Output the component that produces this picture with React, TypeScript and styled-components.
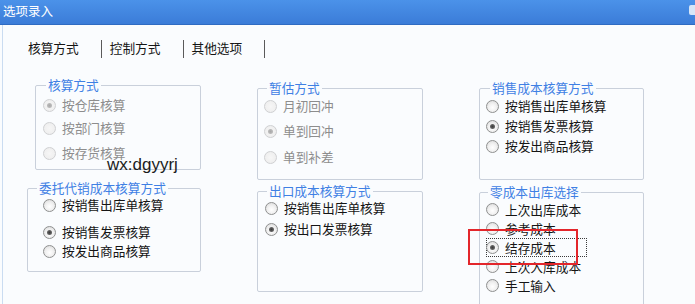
import React from "react";
import styled, { createGlobalStyle, css } from "styled-components";

const Global = createGlobalStyle`
  html, body { margin: 0; padding: 0; background: #fafcfe; }
  body { font-family: "Noto Sans CJK SC", "Noto Sans", sans-serif; }
`;

const FONT = 12.7;

const Window = styled.div`
  width: 695px;
  height: 304px;
  overflow: hidden;
  display: flex;
  flex-direction: column;
  background: #fafcfe;
  font-family: "Noto Sans CJK SC", "Noto Sans", sans-serif;
`;

const TitleBar = styled.div`
  flex: none;
  height: 24px;
  background: linear-gradient(#4b92e9, #3b7cd8);
  border-bottom: 1px solid #2f6bc2;
  display: flex;
  align-items: flex-start;
  justify-content: space-between;
  padding-left: 3px;
`;

const Title = styled.span`
  color: #ffffff;
  font-size: 12.5px;
  line-height: 21px;
`;

const CloseEdge = styled.span`
  width: 6px;
  height: 10px;
  margin-top: 5px;
  background: #d7e6f8;
  border-radius: 2px 0 0 2px;
`;

const Body = styled.div`
  flex: 1;
  min-height: 0;
  overflow: hidden;
  margin-left: 2px;
  border-left: 1px solid #cadcf1;
  display: flex;
  flex-direction: column;
`;

const TabBar = styled.div`
  flex: none;
  height: 46px;
  display: flex;
  align-items: center;
  padding-left: 25px;
`;

const Tab = styled.span`
  font-size: ${FONT}px;
  color: #141414;
  line-height: 18px;
`;

const TabSep = styled.span`
  width: 1px;
  height: 18px;
  background: #5a5a5a;
  margin: 2px 8px 0 22px;
`;

const Columns = styled.div`
  display: grid;
  grid-template-columns: 174px 166px 165px;
  column-gap: 56px;
  padding-left: 24px;
  align-items: start;
`;

const Column = styled.div`
  display: flex;
  flex-direction: column;
`;

const Group = styled.div<{ $h: number; $mt: number; $ml: number }>`
  position: relative;
  box-sizing: border-box;
  height: ${(p) => p.$h}px;
  margin-top: ${(p) => p.$mt}px;
  margin-left: ${(p) => p.$ml}px;
  border: 1px solid #c9d0db;
  border-radius: 2px;
`;

const Legend = styled.div<{ $lx: number }>`
  display: block;
  width: fit-content;
  margin: -9px 0 0 ${(p) => p.$lx}px;
  padding: 0 2px;
  background: #fafcfe;
  line-height: 16px;
  font-size: ${FONT}px;
  color: #3f80e4;
  white-space: nowrap;
`;

const Option = styled.label<{ $h: number; $mt: number; $pl: number }>`
  display: flex;
  align-items: center;
  height: ${(p) => p.$h}px;
  margin-top: ${(p) => p.$mt}px;
  padding-left: ${(p) => p.$pl}px;
`;

const Control = styled.span<{ $focus?: boolean }>`
  display: inline-flex;
  align-items: center;
  gap: 6px;
  height: 100%;
  box-sizing: border-box;
  ${(p) =>
    p.$focus &&
    css`
      width: 101px;
      outline: 1px dotted #3a3a3a;
      outline-offset: -1px;
    `}
`;

const Radio = styled.span<{ $checked?: boolean; $disabled?: boolean }>`
  position: relative;
  flex: none;
  width: 13px;
  height: 13px;
  box-sizing: border-box;
  border-radius: 50%;
  border: 1px solid ${(p) => (p.$disabled ? "#cfd0d2" : "#8f9090")};
  background: ${(p) =>
    p.$disabled
      ? "radial-gradient(circle, #f6f6f6 0, #ececec 100%)"
      : "radial-gradient(circle at 50% 60%, #ffffff 0, #f1f1f1 45%, #d6d6d6 100%)"};
  ${(p) =>
    p.$checked &&
    css`
      &::after {
        content: "";
        position: absolute;
        left: 3px;
        top: 3px;
        width: 5px;
        height: 5px;
        border-radius: 50%;
        background: ${p.$disabled
          ? "radial-gradient(circle, #a9a9a9 0, #c4c4c4 100%)"
          : "radial-gradient(circle, #3c3c3c 0, #7a7a7a 100%)"};
      }
    `}
`;

const OptionText = styled.span<{ $disabled?: boolean }>`
  font-size: ${FONT}px;
  line-height: 16px;
  color: ${(p) => (p.$disabled ? "#8d8d8d" : "#151515")};
  white-space: nowrap;
`;

const Watermark = styled.span`
  position: absolute;
  left: 71px;
  top: 70px;
  font-family: "Liberation Sans", Arial, sans-serif;
  font-size: 17px;
  line-height: 17px;
  color: #1c1c1c;
  white-space: nowrap;
  z-index: 2;
`;

const Highlight = styled.span`
  position: absolute;
  left: -12px;
  top: 36px;
  width: 110px;
  height: 36px;
  box-sizing: border-box;
  border: 2px solid #e3262b;
  z-index: 3;
  pointer-events: none;
`;

type Opt = { label: string; checked?: boolean; mt?: number; focus?: boolean };
type GroupDef = {
  title: string;
  h: number;
  mt: number;
  ml?: number;
  lx?: number;
  pl: number;
  rowH: number;
  disabled?: boolean;
  options: Opt[];
  extra?: React.ReactNode;
};

const columns: GroupDef[][] = [
  [
    {
      title: "核算方式",
      h: 85,
      mt: 14,
      ml: 8,
      lx: 10,
      pl: 7,
      rowH: 20,
      disabled: true,
      options: [
        { label: "按仓库核算", checked: true, mt: 2 },
        { label: "按部门核算", mt: 3 },
        { label: "按存货核算", mt: 5 },
      ],
      extra: <Watermark>wx:dgyyrj</Watermark>,
    },
    {
      title: "委托代销成本核算方式",
      h: 84,
      mt: 18,
      lx: 9,
      pl: 15,
      rowH: 20,
      options: [
        { label: "按销售出库单核算", mt: -1 },
        { label: "按销售发票核算", checked: true, mt: 7 },
        { label: "按发出商品核算", mt: -1 },
      ],
    },
  ],
  [
    {
      title: "暂估方式",
      h: 92,
      mt: 17,
      lx: 9,
      pl: 6,
      rowH: 20,
      disabled: true,
      options: [
        { label: "月初回冲", mt: 0 },
        { label: "单到回冲", checked: true, mt: 5 },
        { label: "单到补差", mt: 6 },
      ],
    },
    {
      title: "出口成本核算方式",
      h: 101,
      mt: 11,
      lx: 9,
      pl: 7,
      rowH: 20,
      options: [
        { label: "按销售出库单核算", mt: -1 },
        { label: "按出口发票核算", checked: true, mt: 1 },
      ],
    },
  ],
  [
    {
      title: "销售成本核算方式",
      h: 92,
      mt: 17,
      lx: 10,
      pl: 6,
      rowH: 20,
      options: [
        { label: "按销售出库单核算" },
        { label: "按销售发票核算", checked: true },
        { label: "按发出商品核算" },
      ],
    },
    {
      title: "零成本出库选择",
      h: 130,
      mt: 12,
      lx: 8,
      pl: 6,
      rowH: 19,
      options: [
        { label: "上次出库成本" },
        { label: "参考成本" },
        { label: "结存成本", checked: true, focus: true },
        { label: "上次入库成本" },
        { label: "手工输入" },
      ],
      extra: <Highlight />,
    },
  ],
];

const tabs = ["核算方式", "控制方式", "其他选项"];

export default function App() {
  return (
    <>
      <Global />
      <Window>
        <TitleBar>
          <Title>选项录入</Title>
          <CloseEdge />
        </TitleBar>
        <Body>
          <TabBar>
            {tabs.map((t) => (
              <React.Fragment key={t}>
                <Tab>{t}</Tab>
                <TabSep />
              </React.Fragment>
            ))}
          </TabBar>
          <Columns>
            {columns.map((col, ci) => (
              <Column key={ci}>
                {col.map((g) => (
                  <Group key={g.title} $h={g.h} $mt={g.mt} $ml={g.ml ?? 0}>
                    <Legend $lx={g.lx ?? 9}>{g.title}</Legend>
                    {g.options.map((o) => (
                      <Option key={o.label} $h={g.rowH} $mt={o.mt ?? 0} $pl={g.pl}>
                        <Control $focus={o.focus}>
                          <Radio $checked={o.checked} $disabled={g.disabled} />
                          <OptionText $disabled={g.disabled}>{o.label}</OptionText>
                        </Control>
                      </Option>
                    ))}
                    {g.extra}
                  </Group>
                ))}
              </Column>
            ))}
          </Columns>
        </Body>
      </Window>
    </>
  );
}
